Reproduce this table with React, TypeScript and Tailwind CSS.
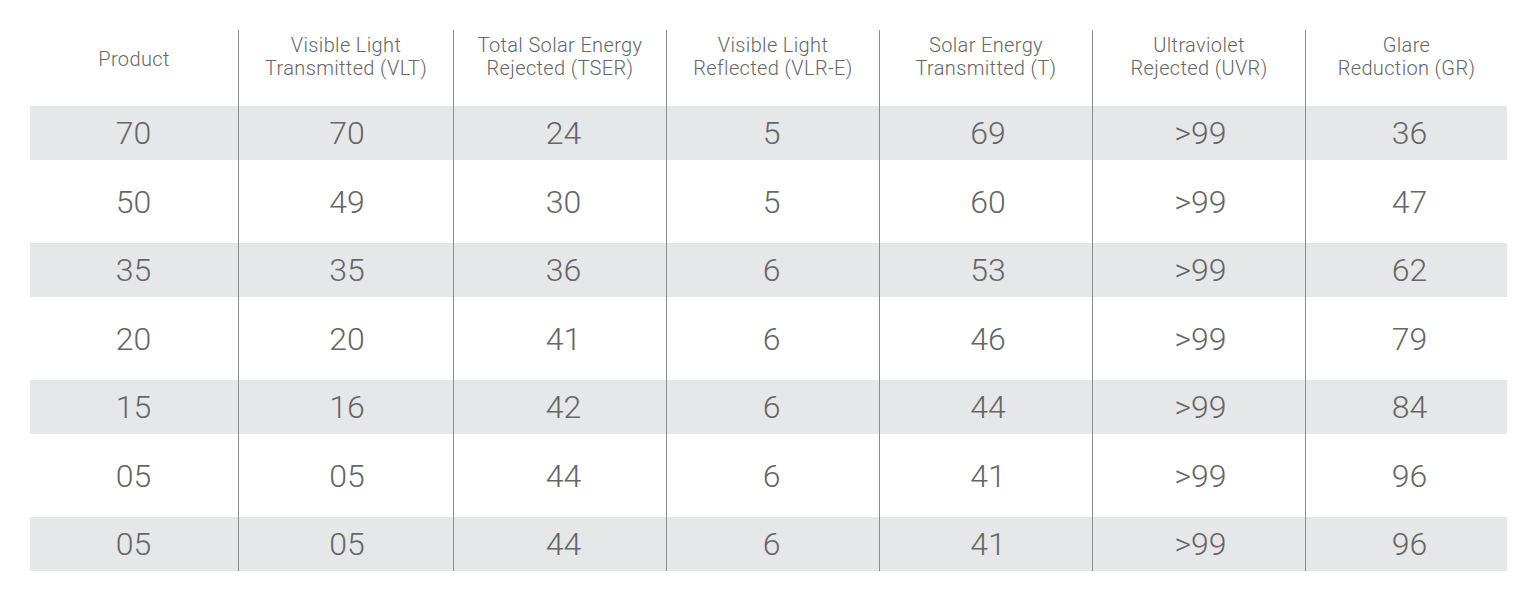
const headers = [
  ["Product"],
  ["Visible Light", "Transmitted (VLT)"],
  ["Total Solar Energy", "Rejected (TSER)"],
  ["Visible Light", "Reflected (VLR-E)"],
  ["Solar Energy", "Transmitted (T)"],
  ["Ultraviolet", "Rejected (UVR)"],
  ["Glare", "Reduction (GR)"],
];

// small nudges so the figures sit where the original's do
const nudge = ["pr-[1px]", "pl-[2px]", "pl-[7px]", "pr-[3px]", "pl-[4px]", "pl-[3px]", "pl-[6px]"];

const rows = [
  ["70", "70", "24", "5", "69", ">99", "36"],
  ["50", "49", "30", "5", "60", ">99", "47"],
  ["35", "35", "36", "6", "53", ">99", "62"],
  ["20", "20", "41", "6", "46", ">99", "79"],
  ["15", "16", "42", "6", "44", ">99", "84"],
  ["05", "05", "44", "6", "41", ">99", "96"],
  ["05", "05", "44", "6", "41", ">99", "96"],
];

export default function App() {
  return (
    <div className="min-h-[600px] bg-white pt-[30px] pl-[30px] font-['Roboto',sans-serif] font-light text-[#666]">
      <div className="grid w-[1477px] grid-cols-[208px_215px_213px_213px_213px_213px_202px]">
        {headers.map((lines, i) => (
          <div
            key={i}
            className={`flex h-[76px] flex-col items-center justify-center text-center text-[20px] leading-[23px] tracking-[0.35px] ${
              i > 0 ? "border-l border-[#8c8c8c] pb-[22px]" : "pb-[18px]"
            }`}
          >
            {lines.map((l) => (
              <span key={l}>{l}</span>
            ))}
          </div>
        ))}

        {rows.map((row, r) =>
          row.map((cell, c) => (
            <div
              key={`${r}-${c}`}
              className={`flex items-center justify-center text-[32px] ${nudge[c]} ${
                r % 2 === 0 ? "h-[54px] bg-[#e6e7e8]" : "h-[83px]"
              } ${c > 0 ? "border-l border-[#8c8c8c]" : ""}`}
            >
              {cell}
            </div>
          ))
        )}
      </div>
    </div>
  );
}
